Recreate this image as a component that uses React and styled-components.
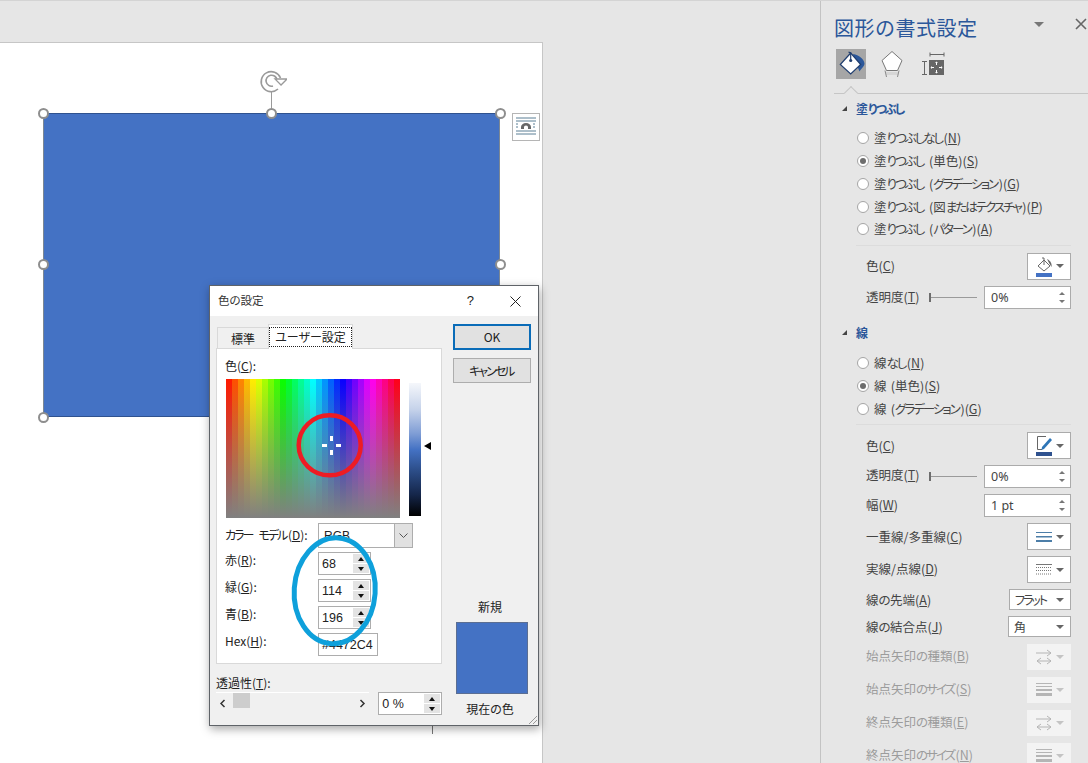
import React from "react";
import styled, { createGlobalStyle } from "styled-components";

const Global = createGlobalStyle`
  html, body { margin: 0; padding: 0; width: 1088px; height: 763px; overflow: hidden; background: #e6e6e6; }
  body { font-family: "Noto Sans CJK JP", "Liberation Sans", sans-serif; font-feature-settings: "palt" 1; }
  * { box-sizing: border-box; }
  u { text-underline-offset: 1px; }
`;

const Screen = styled.div`
  display: flex; width: 1088px; height: 763px; overflow: hidden; background: #e6e6e6;
  border-top: 1px solid #d4d4d4;
`;
const Workspace = styled.div`
  position: relative; width: 820px; height: 100%; padding-top: 41px;
`;
const DocPage = styled.div`
  position: relative; width: 543px; height: 722px; background: #fff;
  border-top: 1px solid #c6c6c6; border-right: 1px solid #c6c6c6;
`;
const Shape = styled.div`
  position: absolute; left: 43px; top: 70px; width: 457px; height: 304px;
  background: #4472c4; border: 1px solid #2f528f; border-left-color: #7b8794; border-right-color: #7b8794;
`;
const Handle = styled.div`
  position: absolute; width: 11px; height: 11px; border-radius: 50%;
  background: #fff; border: 2px solid #8e8e8e;
  left: ${p => p.$x - 5.5}px; top: ${p => p.$y - 5.5}px;
`;
const RotateStem = styled.div`
  position: absolute; left: 271px; top: 49px; width: 1px; height: 16px; background: #9a9a9a;
`;
const RotateIcon = styled.svg`
  position: absolute; left: 259px; top: 26px; width: 28px; height: 24px;
`;
const LayoutButton = styled.div`
  position: absolute; left: 512px; top: 70px; width: 28px; height: 28px;
  background: #fff; border: 1px solid #b5b5b5; display: flex; align-items: center; justify-content: center;
`;
const Tick = styled.div`
  position: absolute; left: 432px; top: 725px; width: 1px; height: 8px; background: #777;
`;
const Kana = styled.span` letter-spacing: -2px; margin-right: 1.5px; `;

/* Dialog */
const Dialog = styled.div`
  position: absolute; left: 209px; top: 284px; width: 330px; height: 441px;
  background: #f0f0f0; border: 1px solid #5f6368;
  box-shadow: 1px 3px 9px rgba(0,0,0,.35);
  display: flex; flex-direction: column; color: #222; font-size: 12px;
`;
const DlgTitle = styled.div`
  height: 30px; background: #fff; display: flex; align-items: center; padding: 0 17px 0 8px; flex: none;
`;
const DlgTitleText = styled.span` flex: 1; font-size: 11.5px; color: #333; padding-bottom: 2px; `;
const Help = styled.span` font-size: 13px; margin-right: 36px; font-family: "Liberation Sans", sans-serif; padding-bottom: 2px; `;
const DlgBody = styled.div`
  flex: 1; display: grid; grid-template-columns: 237px 1fr; padding: 8px 7px 0 6px;
`;
const LeftCol = styled.div` display: flex; flex-direction: column; width: 226px; padding-top: 1px; `;
const Tabs = styled.div` display: flex; align-items: flex-end; height: 24px; padding-left: 1px; position: relative; z-index: 1; margin-bottom: -1px;`;
const Tab = styled.div`
  height: ${p => p.$on ? 25 : 22}px; width: ${p => p.$on ? 85 : 51}px;
  background: ${p => p.$on ? "#fff" : "#f0f0f0"};
  border: 1px solid #d9d9d9; border-bottom: ${p => p.$on ? "none" : "1px solid #d9d9d9"};
  ${p => !p.$on && "border-right: none;"}
  display: flex; align-items: center; justify-content: center; font-size: 12px;
`;
const Focus = styled.span`
  outline: 1px dotted #222; padding: 0 5px; line-height: 18px; font-size: 12px; white-space: nowrap;
`;
const TabPanel = styled.div`
  background: #fff; border: 1px solid #d9d9d9; height: 316px; padding: 10px 8px 0 8px;
  display: flex; flex-direction: column;
`;
const PanelLabel = styled.div` font-size: 12px; line-height: 14px; height: 20px; `;
const Picker = styled.div` display: flex; gap: 9px; height: 139px; `;
const ColorField = styled.svg` display: block; width: 174px; height: 139px; flex: none; margin-left: 1px; `;
const LumWrap = styled.div` position: relative; width: 12px; height: 137px; margin-top: 4px; `;
const Lum = styled.div`
  width: 12px; height: 133px;
  background: linear-gradient(#f5f7fb 0%, #c5d2ea 20%, #7f9dd5 38%, #4472c4 50%, #2c4d88 66%, #15264a 84%, #000 100%);
`;
const LumArrow = styled.div`
  position: absolute; left: 15px; top: 59px; width: 0; height: 0;
  border-top: 4.5px solid transparent; border-bottom: 4.5px solid transparent; border-right: 7px solid #000;
`;
const FormRows = styled.div` margin-top: 5px; display: flex; flex-direction: column; `;
const FormRow = styled.div`
  display: flex; align-items: flex-start; height: ${p => p.$h}px;
`;
const FormLabel = styled.div`
  width: 93px; font-size: 12px; line-height: 16px; flex: none; white-space: nowrap; word-spacing: 2px; padding-top: ${p => p.$pt || 0}px;
`;
const Select = styled.div`
  width: 95px; height: 25px; background: #fff; border: 1px solid #adadad; display: flex; justify-content: space-between;
  font-size: 12px; line-height: 25px; padding-left: 5px; font-family: "Liberation Sans", sans-serif;
`;
const SelectBtn = styled.div`
  width: 18px; height: 23px; background: #e1e1e1; border-left: 1px solid #adadad;
  display: flex; align-items: center; justify-content: center;
`;
const NumBox = styled.div`
  width: ${p => p.$w || 53}px; height: 23px; background: #fff; border: 1px solid #adadad;
  display: flex; justify-content: space-between; align-items: center; padding: 1px 1px 1px 3px;
  font-family: "Liberation Sans", sans-serif; font-size: 12.5px; color: #222; overflow: hidden; white-space: nowrap;
`;
const Spin = styled.div` display: flex; flex-direction: column; width: 16px; height: 19px; gap: 1px; flex: none; `;
const SpinBtn = styled.div`
  flex: 1; background: #e3e3e3; display: flex; align-items: center; justify-content: center;
  &::before { content: ""; border-left: 3.5px solid transparent; border-right: 3.5px solid transparent;
    ${p => p.$up ? "border-bottom: 4px solid #111;" : "border-top: 4px solid #111;"} }
`;
const Transp = styled.div` display: flex; flex-direction: column; margin-top: 11px; `;
const TranspLabel = styled.div` font-size: 12px; line-height: 16px; height: 17px;`;
const TranspRow = styled.div` display: flex; align-items: flex-start; gap: 9px; `;
const Scroll = styled.div`
  width: 154px; height: 21px; border-top: 1px solid #fff; display: flex; align-items: center; padding: 0 3px; justify-content: space-between; position: relative;
`;
const ScrollChevron = styled.svg` width: 7px; height: 9px; `;
const Thumb = styled.div`
  position: absolute; left: 17px; top: 0; width: 17px; height: 15px; background: #cdcdcd;
`;
const RightCol = styled.div` display: flex; flex-direction: column; align-items: center; width: 78px; position: relative; `;
const DlgButton = styled.div`
  width: 78px; height: ${p => p.$primary ? 26 : 25}px; background: #e1e1e1; flex: none;
  border: ${p => p.$primary ? "2px solid #0a6cb8" : "1px solid #adadad"};
  padding-bottom: ${p => p.$primary ? 2 : 0}px;
  display: flex; align-items: center; justify-content: center; font-size: 12px;
  margin-bottom: 8px;
`;
const NewLabel = styled.div` margin-top: 207px; font-size: 12px; line-height: 18px; margin-right: 4px;`;
const Swatch = styled.div`
  width: 72px; height: 72px; background: #4472c4; border: 1px solid #5b6e92; margin-top: 6px; flex: none;
`;
const CurLabel = styled.div` margin-top: 6px; font-size: 12px; line-height: 18px; margin-right: 4px; `;
const Grip = styled.svg` position: absolute; right: 0; bottom: 0; width: 11px; height: 11px; `;

const Annotation = styled.svg`
  position: absolute; left: 0; top: 0; width: 820px; height: 762px; pointer-events: none; overflow: visible;
`;

/* Pane */
const Pane = styled.aside`
  width: 268px; height: 100%; flex: none; border-left: 1px solid #c3c3c3; position: relative;
  padding: 0 17px 0 13px; color: #444; font-size: 12.5px; background: #e6e6e6;
`;
const PaneHead = styled.div` height: 48px; display: flex; align-items: center; padding-top: 6px; `;
const PaneTitle = styled.h1`
  margin: 0; font-size: 20px; font-weight: 400; color: #2b579a; flex: 1; line-height: 24px; letter-spacing: .5px;
  font-feature-settings: "palt" 0; white-space: nowrap;
`;
const PaneCaret = styled.div`
  position: absolute; left: 213px; top: 21px; width: 0; height: 0;
  border-left: 5px solid transparent; border-right: 5px solid transparent; border-top: 5px solid #777;
`;
const PaneClose = styled.svg` position: absolute; left: 254px; top: 17px; width: 12px; height: 12px; `;
const IconTabs = styled.div` display: flex; gap: 11px; height: 30px; margin-left: 2px; `;
const IconTab = styled.div`
  width: 30px; height: 30px; background: ${p => p.$on ? "#a6a6a6" : "transparent"};
  display: flex; align-items: center; justify-content: center;
`;
const TabRule = styled.div`
  position: relative; height: 1px; background: #c6c6c6; margin-top: 14px; margin-right: -17px;
  &::before { content: ""; position: absolute; left: 12px; top: -5px; width: 9px; height: 9px; background: #e6e6e6;
    border-left: 1px solid #c6c6c6; border-top: 1px solid #c6c6c6; transform: rotate(45deg); }
`;
const SectionHead = styled.div`
  display: flex; align-items: center; height: 22px; margin-top: ${p => p.$mt}px; color: #2b579a; font-weight: 700; font-size: 12px;
  padding-left: 8px; gap: 9px;
  &::before { content: ""; width: 0; height: 0; border-left: 5px solid transparent; border-bottom: 5px solid #444; }
`;
const RadioList = styled.div` margin-top: 8px; padding-left: 23px; `;
const RadioRow = styled.div` height: 22.75px; display: flex; align-items: center; gap: 5px; white-space: nowrap; `;
const RadioDot = styled.div`
  width: 12px; height: 12px; border-radius: 50%; border: 1px solid #a5a5a5; background: #fff; flex: none;
  display: flex; align-items: center; justify-content: center;
  &::after { content: ""; width: 6px; height: 6px; border-radius: 50%; background: ${p => p.$on ? "#6d6d6d" : "transparent"}; }
`;
const RadioText = styled.span` margin-bottom: 1px; word-spacing: 1.5px; `;
const Sep = styled.div` height: 1px; background: #dcdcdc; margin: ${p => p.$mt}px 0 0 22px; `;
const PropRow = styled.div`
  display: flex; align-items: center; justify-content: space-between; height: ${p => p.$h}px; margin-top: ${p => p.$mt}px;
  padding-left: 32px; white-space: nowrap; color: ${p => p.$off ? "#9c9c9c" : "#444"};
`;
const PropLabel = styled.span` line-height: 16px; margin-bottom: ${p => p.$mb ?? 2}px; `;
const SliderBox = styled.div` display: flex; align-items: center; `;
const Track = styled.div`
  width: 48px; height: 1px; background: #9a9a9a; margin-right: 7px; position: relative;
  &::before { content: ""; position: absolute; left: 0; top: -4px; width: 2px; height: 9px; background: #6d6d6d; }
`;
const PaneInput = styled.div`
  width: 87px; height: 23px; background: #fff; border: 1px solid #ababab; display: flex; align-items: center; justify-content: space-between;
  padding: 0 5px 0 6px; font-size: 12.5px; color: #444; font-family: "Noto Sans", sans-serif;
`;
const PaneSpin = styled.div` display: flex; flex-direction: column; gap: 5px; `;
const PaneArrow = styled.div`
  border-left: 3px solid transparent; border-right: 3px solid transparent;
  ${p => p.$up ? "border-bottom: 3px solid #777;" : "border-top: 3px solid #777;"}
`;
const MenuBtn = styled.div`
  width: 44px; height: ${p => p.$h || 27}px; background: ${p => p.$off ? "#f3f3f3" : "#fff"};
  border: 1px solid ${p => p.$off ? "#f3f3f3" : "#ababab"};
  display: flex; align-items: center; justify-content: space-between; padding: 0 6px 0 8px;
`;
const Caret = styled.div`
  border-left: 4px solid transparent; border-right: 4px solid transparent;
  border-top: 4px solid ${p => p.$off ? "#c4c4c4" : "#666"}; flex: none;
`;
const PaneSelect = styled.div`
  width: ${p => p.$w}px; height: 21px; background: #fff; border: 1px solid #ababab;
  display: flex; align-items: center; justify-content: space-between; padding: 0 6px 0 5px; font-size: 12px; color: #444;
`;

/* Narrows runs of kana, as the narrow UI face of the original does */
const J = ({ children }) => (
  <>
    {String(children).split(/([ぁ-んァ-ヶー]+)/).map((part, i) =>
      i % 2 ? <Kana key={i}>{part}</Kana> : part
    )}
  </>
);

const FieldBands = () => {
  const cols = 29, out = [];
  for (let c = 0; c < cols; c++) {
    const h = (c + .5) / cols * 360;
    out.push(<rect key={c} x={c * 6} y="0" width="6.1" height="139" fill={`hsl(${h} 100% 50%)`} />);
  }
  return (
    <>
      <defs>
        <linearGradient id="fade" x1="0" y1="0" x2="0" y2="1">
          <stop offset="0" stopColor="#808080" stopOpacity="0" />
          <stop offset="1" stopColor="#808080" stopOpacity="1" />
        </linearGradient>
      </defs>
      {out}
      <rect width="174" height="139" fill="url(#fade)" />
    </>
  );
};

const Bucket = () => (
  <svg width="30" height="30" viewBox="0 0 30 30">
    <path d="M17 5 C23 6 28 10 28.5 14.5 C28.6 17 25 20 23.5 22.5 L20 14 Z" fill="#2b579a" />
    <path d="M14.7 4 L24.7 15.5 L14.7 25 L4.3 15.5 Z" fill="#fff" stroke="#1f3d6e" strokeWidth="1.2" />
    <path d="M14.7 11 V4 L12.5 3" stroke="#1f3d6e" strokeWidth="1.2" fill="none" />
    <circle cx="14.7" cy="11.5" r="1.6" fill="#1f3d6e" />
  </svg>
);
const Pentagon = () => (
  <svg width="24" height="28" viewBox="0 0 24 28">
    <rect x="6" y="22" width="12" height="3" fill="#d6d6d6" />
    <path d="M12 1.5 L22 10.5 L17.5 20.5 H6.5 L2 10.5 Z" fill="#fff" stroke="#777" />
    <path d="M5 20.5 L6.5 27 M19 20.5 L17.5 27" stroke="#8a8a8a" fill="none" />
  </svg>
);
const SizeIcon = () => (
  <svg width="24" height="24" viewBox="0 0 24 24">
    <path d="M9 2.5 H23 M9 .5 V4.5 M23 .5 V4.5 M1 9.5 H6 M1 22.5 H6 M3.5 9.5 V22.5" stroke="#666" fill="none" />
    <rect x="8" y="8" width="15" height="15" fill="#666" />
    <path d="M15.5 10 V13 M15.5 18 V21 M10 15.5 H13 M18 15.5 H21" stroke="#fff" />
    <path d="M14 11 L15.5 9.5 L17 11 Z M14 20 L15.5 21.5 L17 20 Z M11 14 L9.5 15.5 L11 17 Z M20 14 L21.5 15.5 L20 17 Z" fill="#fff" />
  </svg>
);
const PenColor = () => (
  <svg width="17" height="21" viewBox="0 0 17 21">
    <path d="M10 1.5 H1.5 V14.5 H6" stroke="#666" fill="none" />
    <path d="M6 12 L14 3 L16 5 L8 14 L5.5 15 Z" fill="#2e75b6" />
    <rect x="0" y="17" width="16" height="4" fill="#2f528f" />
  </svg>
);
const FillColor = () => (
  <svg width="17" height="21" viewBox="0 0 17 21">
    <path d="M8 4 L14 10 L8 15 L2 10 Z" fill="#fff" stroke="#666" />
    <path d="M8 9 V2 H6" stroke="#666" fill="none" />
    <path d="M11 3 C15 5 16 8 15.5 11 L13 7 Z" fill="#666" />
    <rect x="0" y="17" width="16" height="4" fill="#4472c4" />
  </svg>
);
const LinesIcon = () => (
  <svg width="16" height="14" viewBox="0 0 16 14">
    <rect y="2" width="16" height="1" fill="#4d7ea8" />
    <rect y="6" width="16" height="1.5" fill="#4d7ea8" />
    <rect y="10" width="16" height="2" fill="#4d7ea8" />
  </svg>
);
const DashIcon = () => (
  <svg width="16" height="11" viewBox="0 0 16 11">
    <path d="M0 .5H16" stroke="#777" />
    <path d="M0 3.5H16 M0 6.5H16 M0 10H16" stroke="#777" strokeDasharray="1 1" />
  </svg>
);
const ArrowsIcon = () => (
  <svg width="16" height="16" viewBox="0 0 16 16">
    <path d="M0 4H15 M11 1L15 4 L11 7 M1 12H15 M5 9L1 12L5 15 M11 9 L15 12 L11 15" stroke="#b5b5b5" fill="none" />
  </svg>
);
const WeightsIcon = () => (
  <svg width="16" height="14" viewBox="0 0 16 14">
    <rect y="0" width="16" height="1" fill="#b5b5b5" />
    <rect y="3" width="16" height="1" fill="#b5b5b5" />
    <rect y="6" width="16" height="2" fill="#b5b5b5" />
    <rect y="10" width="16" height="3" fill="#b5b5b5" />
  </svg>
);

const DSpin = () => <Spin><SpinBtn $up /><SpinBtn /></Spin>;
const PSpin = () => <PaneSpin><PaneArrow $up /><PaneArrow /></PaneSpin>;
const Radio = ({ on, text, hot }) => (
  <RadioRow><RadioDot $on={on} /><RadioText><J>{text}</J>(<u>{hot}</u>)</RadioText></RadioRow>
);
const Label = ({ text, hot, mb }) => <PropLabel $mb={mb}><J>{text}</J>(<u>{hot}</u>)</PropLabel>;

const Opacity = ({ mt = 7 }) => (
  <PropRow $h={22} $mt={mt}>
    <Label text="透明度" hot="T" />
    <SliderBox><Track /><PaneInput>0%<PSpin /></PaneInput></SliderBox>
  </PropRow>
);

export default function App() {
  return (
    <Screen>
      <Global />
      <Workspace>
        <DocPage>
          <Shape />
          <RotateIcon viewBox="0 0 28 24">
            <path d="M21.5 9 A10 10 0 1 0 19 20" fill="none" stroke="#9a9a9a" strokeWidth="1.6" />
            <path d="M18 11 A5.5 5.5 0 1 0 14 17" fill="none" stroke="#9a9a9a" strokeWidth="1.6" />
            <path d="M16 10 H28 L22 16 Z" fill="#fff" stroke="#9a9a9a" strokeWidth="1.3" />
          </RotateIcon>
          <RotateStem />
          <Handle $x={43} $y={70} /><Handle $x={271} $y={70} /><Handle $x={500} $y={70} />
          <Handle $x={43} $y={221} /><Handle $x={500} $y={221} />
          <Handle $x={43} $y={374} />
          <LayoutButton>
            <svg width="20" height="20" viewBox="0 0 20 20">
              <path d="M0 1H20 M0 4H20 M0 17H20 M0 14H20" stroke="#5b7f95" fill="none" />
              <path d="M0 7H3 M17 7H20 M0 10H3 M17 10H20" stroke="#5b7f95" strokeDasharray="2 1" fill="none" />
              <path d="M5 12 V10 A5 4 0 0 1 15 10 V12 H12 V10 A2 1.5 0 0 0 8 10 V12 Z" fill="#666" />
            </svg>
          </LayoutButton>
        </DocPage>
        <Tick />
        <Dialog>
          <DlgTitle>
            <DlgTitleText>色の設定</DlgTitleText>
            <Help>?</Help>
            <svg width="11" height="11" viewBox="0 0 11 11"><path d="M.5 .5L10.5 10.5M10.5 .5L.5 10.5" stroke="#222" /></svg>
          </DlgTitle>
          <DlgBody>
            <LeftCol>
              <Tabs>
                <Tab>標準</Tab>
                <Tab $on><Focus>ユーザー設定</Focus></Tab>
              </Tabs>
              <TabPanel>
                <PanelLabel>色(<u>C</u>):</PanelLabel>
                <Picker>
                  <ColorField viewBox="0 0 174 139"><FieldBands /></ColorField>
                  <LumWrap><Lum /><LumArrow /></LumWrap>
                </Picker>
                <FormRows>
                  <FormRow $h={29}>
                    <FormLabel $pt={4}><J>カラー モデル</J>(<u>D</u>):</FormLabel>
                    <Select>RGB<SelectBtn>
                      <svg width="9" height="6" viewBox="0 0 9 6"><path d="M.5 .5L4.5 4.5L8.5 .5" stroke="#555" fill="none" /></svg>
                    </SelectBtn></Select>
                  </FormRow>
                  <FormRow $h={27}><FormLabel>赤(<u>R</u>):</FormLabel><NumBox>68<DSpin /></NumBox></FormRow>
                  <FormRow $h={27}><FormLabel>緑(<u>G</u>):</FormLabel><NumBox>114<DSpin /></NumBox></FormRow>
                  <FormRow $h={27}><FormLabel>青(<u>B</u>):</FormLabel><NumBox>196<DSpin /></NumBox></FormRow>
                  <FormRow $h={24}><FormLabel>Hex(<u>H</u>):</FormLabel><NumBox $w={60}>#4472C4</NumBox></FormRow>
                </FormRows>
              </TabPanel>
              <Transp>
                <TranspLabel>透過性(<u>T</u>):</TranspLabel>
                <TranspRow>
                  <Scroll>
                    <ScrollChevron viewBox="0 0 7 9"><path d="M5.5 1L2 4.5L5.5 8" stroke="#333" strokeWidth="1.5" fill="none" /></ScrollChevron>
                    <Thumb />
                    <ScrollChevron viewBox="0 0 7 9"><path d="M1.5 1L5 4.5L1.5 8" stroke="#333" strokeWidth="1.5" fill="none" /></ScrollChevron>
                  </Scroll>
                  <NumBox $w={64}>0 %<DSpin /></NumBox>
                </TranspRow>
              </Transp>
            </LeftCol>
            <RightCol>
              <DlgButton $primary>OK</DlgButton>
              <DlgButton><J>キャンセル</J></DlgButton>
              <NewLabel>新規</NewLabel>
              <Swatch />
              <CurLabel>現在の色</CurLabel>
            </RightCol>
          </DlgBody>
          <Grip viewBox="0 0 11 11"><path d="M10 2L2 10M10 6L6 10" stroke="#999" fill="none" /></Grip>
        </Dialog>
        <Annotation viewBox="0 0 820 762">
          <ellipse cx="329.7" cy="444.3" rx="31" ry="30" fill="none" stroke="#ed1c24" strokeWidth="4.5" />
          <rect x="330" y="435" width="3" height="5" fill="#fff" />
          <rect x="330" y="449" width="3" height="5" fill="#fff" />
          <rect x="322" y="443" width="5" height="3" fill="#fff" />
          <rect x="336" y="443" width="5" height="3" fill="#fff" />
          <ellipse cx="334.7" cy="589.8" rx="40.5" ry="53" transform="rotate(4 334.7 589.8)" fill="none" stroke="#0ea0db" strokeWidth="5" />
        </Annotation>
      </Workspace>
      <Pane>
        <PaneHead><PaneTitle>図形の書式設定</PaneTitle></PaneHead>
        <PaneCaret />
        <PaneClose viewBox="0 0 12 12"><path d="M1 1L11 11M11 1L1 11" stroke="#666" strokeWidth="1.6" /></PaneClose>
        <IconTabs>
          <IconTab $on><Bucket /></IconTab>
          <IconTab><Pentagon /></IconTab>
          <IconTab><SizeIcon /></IconTab>
        </IconTabs>
        <TabRule />
        <SectionHead $mt={3}><span><J>塗りつぶし</J></span></SectionHead>
        <RadioList>
          <Radio text="塗りつぶしなし" hot="N" />
          <Radio on text="塗りつぶし (単色)" hot="S" />
          <Radio text="塗りつぶし (グラデーション)" hot="G" />
          <Radio text="塗りつぶし (図またはテクスチャ)" hot="P" />
          <Radio text="塗りつぶし (パターン)" hot="A" />
        </RadioList>
        <Sep $mt={4} />
        <PropRow $h={27} $mt={7}><Label text="色" hot="C" mb={0} /><MenuBtn><FillColor /><Caret /></MenuBtn></PropRow>
        <Opacity />
        <SectionHead $mt={13}>線</SectionHead>
        <RadioList>
          <Radio text="線なし" hot="N" />
          <Radio on text="線 (単色)" hot="S" />
          <Radio text="線 (グラデーション)" hot="G" />
        </RadioList>
        <Sep $mt={4} />
        <PropRow $h={27} $mt={7}><Label text="色" hot="C" mb={0} /><MenuBtn><PenColor /><Caret /></MenuBtn></PropRow>
        <Opacity mt={6} />
        <PropRow $h={22} $mt={7}><Label text="幅" hot="W" mb={0} /><PaneInput>1 pt<PSpin /></PaneInput></PropRow>
        <PropRow $h={27} $mt={7}><Label text="一重線/多重線" hot="C" mb={0} /><MenuBtn><LinesIcon /><Caret /></MenuBtn></PropRow>
        <PropRow $h={27} $mt={6}><Label text="実線/点線" hot="D" /><MenuBtn><DashIcon /><Caret /></MenuBtn></PropRow>
        <PropRow $h={21} $mt={6}><Label text="線の先端" hot="A" mb={0} /><PaneSelect $w={62}><J>フラット</J><Caret /></PaneSelect></PropRow>
        <PropRow $h={21} $mt={6}><Label text="線の結合点" hot="J" mb={0} /><PaneSelect $w={63}>角<Caret /></PaneSelect></PropRow>
        <PropRow $h={26} $mt={7} $off><Label text="始点矢印の種類" hot="B" mb={3} /><MenuBtn $off $h={26}><ArrowsIcon /><Caret $off /></MenuBtn></PropRow>
        <PropRow $h={26} $mt={7} $off><Label text="始点矢印のサイズ" hot="S" mb={3} /><MenuBtn $off $h={26}><WeightsIcon /><Caret $off /></MenuBtn></PropRow>
        <PropRow $h={26} $mt={7} $off><Label text="終点矢印の種類" hot="E" mb={3} /><MenuBtn $off $h={26}><ArrowsIcon /><Caret $off /></MenuBtn></PropRow>
        <PropRow $h={26} $mt={7} $off><Label text="終点矢印のサイズ" hot="N" mb={3} /><MenuBtn $off $h={26}><WeightsIcon /><Caret $off /></MenuBtn></PropRow>
      </Pane>
    </Screen>
  );
}
